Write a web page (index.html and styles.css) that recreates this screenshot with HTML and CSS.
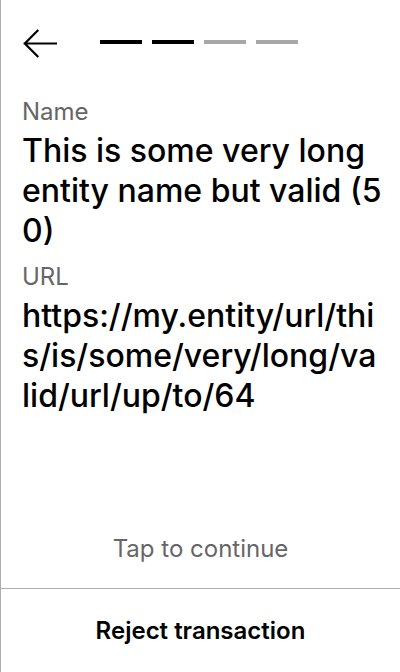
FILE: index.html
```html
<!DOCTYPE html>
<html>
<head>
<meta charset="utf-8">
<link rel="stylesheet" href="styles.css">
</head>
<body>
<div class="screen">
  <div class="header">
    <svg class="back" width="34" height="30" viewBox="0 0 34 30">
      <path d="M1.8 15.5 H33 M14.5 2.8 L1.8 15.5 L14.5 28.2" fill="none" stroke="#000" stroke-width="2.2" stroke-linecap="square"/>
    </svg>
    <div class="progress">
      <span class="seg on"></span>
      <span class="seg on"></span>
      <span class="seg"></span>
      <span class="seg"></span>
    </div>
  </div>
  <div class="content">
    <div class="label">Name</div>
    <div class="value">This is some very long entity name but valid (50)</div>
    <div class="label">URL</div>
    <div class="value">https://my.entity/url/this/is/some/very/long/valid/url/up/to/64</div>
  </div>
  <div class="tap">Tap to continue</div>
  <div class="reject">Reject transaction</div>
</div>
</body>
</html>
```
FILE: styles.css
```css
html, body {
  margin: 0;
  padding: 0;
  background: #fff;
}
.screen {
  width: 399px;
  height: 672px;
  border-left: 1px solid #adadad;
  display: flex;
  flex-direction: column;
  font-family: Inter, "Noto Sans", sans-serif;
  color: #000;
}
.header {
  display: flex;
  align-items: center;
  height: 86px;
  padding-left: 22px;
  flex-shrink: 0;
}
.back {
  display: block;
}
.progress {
  display: flex;
  gap: 10px;
  margin-left: 43px;
  margin-bottom: 2px;
}
.seg {
  width: 42px;
  height: 4px;
  background: #a8a8a8;
}
.seg.on {
  background: #000;
}
.content {
  flex: 1;
  padding: 10px 0 0 21px;
  width: 361px;
}
.label {
  font-size: 24px;
  line-height: 32px;
  color: #666;
  margin-bottom: 3px;
}
.value {
  font-size: 32px;
  font-weight: 500;
  line-height: 40px;
  word-break: break-all;
  margin-bottom: 10px;
}
.tap {
  text-align: center;
  font-size: 24px;
  line-height: 32px;
  color: #666;
  padding-bottom: 23px;
}
.reject {
  border-top: 1px solid #b0b0b0;
  height: 83px;
  flex-shrink: 0;
  display: flex;
  align-items: center;
  justify-content: center;
  font-size: 24px;
  font-weight: 600;
}
```
